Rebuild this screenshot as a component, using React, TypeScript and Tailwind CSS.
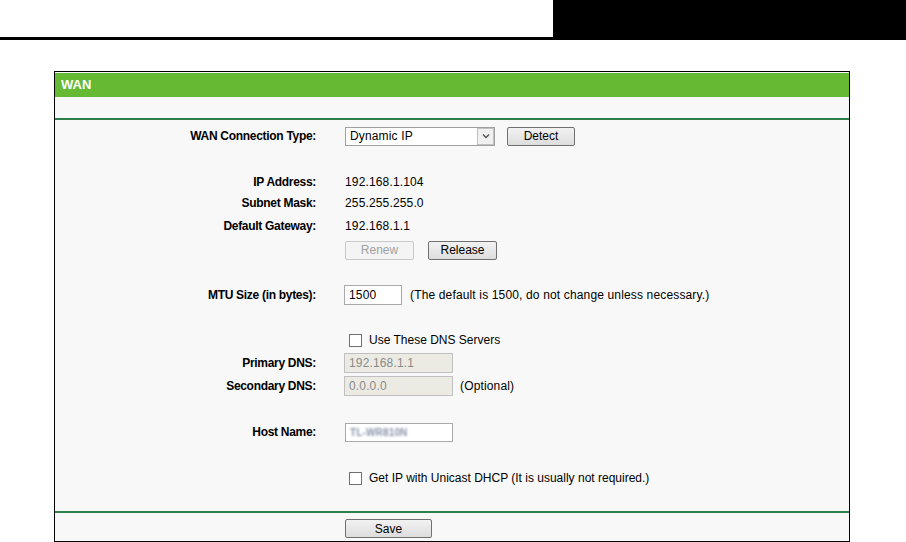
import React from "react";

const font = { fontFamily: '"Liberation Sans", Arial, sans-serif' };

function Row({ label, className = "", children }: { label?: string; className?: string; children?: React.ReactNode }) {
  return (
    <div className={"flex items-center " + className}>
      <div className="w-[261px] shrink-0 text-right font-bold text-[12px] tracking-[-0.3px] text-black">{label ? label : ""}</div>
      <div className="flex items-center pl-[29px] text-[12px] tracking-[0.15px] text-black">{children}</div>
    </div>
  );
}

function Btn({ children, disabled = false, w }: { children: React.ReactNode; disabled?: boolean; w: string }) {
  return (
    <div
      className={
        "h-[19px] flex items-center justify-center rounded-[2px] border text-[12px] tracking-normal bg-gradient-to-b " +
        w +
        (disabled
          ? " border-[#c9c9c9] from-[#f4f4f4] to-[#f4f4f4] text-[#a0a0a0]"
          : " border-[#707070] from-[#f2f2f2] to-[#dddddd] text-black")
      }
    >
      {children}
    </div>
  );
}

function Check({ label }: { label: string }) {
  return (
    <div className="flex items-center">
      <div className="ml-[4px] w-[13px] h-[13px] border border-[#707070] bg-white" />
      <span className="ml-[7px] text-[12px] tracking-normal text-black">{label}</span>
    </div>
  );
}

export default function App() {
  return (
    <div className="w-[906px] h-[542px] bg-white overflow-hidden" style={font}>
      <div className="flex h-[40px]">
        <div className="flex-1 border-b-[3px] border-black" />
        <div className="w-[353px] bg-black" />
      </div>
      <div className="ml-[54px] mt-[31px] w-[796px] h-[471px] border border-black bg-[#f8f8f8] flex flex-col">
        <div className="mt-[1px] h-[24px] bg-[#66b933] flex items-center pl-[6px]">
          <span className="text-white font-bold text-[13px]">WAN</span>
        </div>
        <div className="h-[21px]" />
        <div className="h-[2px] bg-[#2f7f4a]" />
        <div className="pt-[5px] flex flex-col">
          <Row label="WAN Connection Type:" className="h-[22px]">
            <div className="w-[150px] h-[19px] border border-[#a0a0a0] bg-white flex items-center justify-between">
              <span className="pl-[4px] text-[12px]">Dynamic IP</span>
              <div className="w-[17px] h-[17px] border border-[#c0c0c0] bg-[#f0f0f0] flex items-center justify-center">
                <svg width="8" height="6" viewBox="0 0 8 6">
                  <path d="M1 1.5 L4 4.5 L7 1.5" fill="none" stroke="#555" strokeWidth="1.4" />
                </svg>
              </div>
            </div>
            <div className="ml-[12px]">
              <Btn w="w-[68px]">Detect</Btn>
            </div>
          </Row>
          <Row label="IP Address:" className="mt-[24px] h-[21px]">192.168.1.104</Row>
          <Row label="Subnet Mask:" className="h-[22px]">255.255.255.0</Row>
          <Row label="Default Gateway:" className="h-[23px]">192.168.1.1</Row>
          <Row className="mt-[2px] h-[22px]">
            <Btn w="w-[69px]" disabled>
              Renew
            </Btn>
            <div className="ml-[14px]">
              <Btn w="w-[69px]">Release</Btn>
            </div>
          </Row>
          <Row label="MTU Size (in bytes):" className="mt-[23px] h-[22px]">
            <div className="-ml-[1px] w-[58px] h-[20px] border border-[#a9a9a9] bg-white flex items-center pl-[4px]">1500</div>
            <span className="ml-[8px]">(The default is 1500, do not change unless necessary.)</span>
          </Row>
          <Row className="mt-[23px] h-[22px]">
            <Check label="Use These DNS Servers" />
          </Row>
          <Row label="Primary DNS:" className="mt-[1px] h-[22px]">
            <div className="-ml-[1px] w-[109px] h-[20px] border border-[#c0c0c0] bg-[#ebebe4] flex items-center pl-[4px] text-[#8a8a8a]">192.168.1.1</div>
          </Row>
          <Row label="Secondary DNS:" className="mt-[1px] h-[22px]">
            <div className="-ml-[1px] w-[109px] h-[20px] border border-[#c0c0c0] bg-[#ebebe4] flex items-center pl-[4px] text-[#8a8a8a]">0.0.0.0</div>
            <span className="ml-[7px]">(Optional)</span>
          </Row>
          <Row label="Host Name:" className="mt-[24px] h-[22px]">
            <div className="w-[108px] h-[19px] border border-[#a9a9a9] bg-white flex items-center pl-[4px]">
              <span className="text-[10px] font-bold text-[#8a93aa] blur-[1.3px]">TL-WR810N</span>
            </div>
          </Row>
          <Row className="mt-[24px] h-[22px]">
            <Check label="Get IP with Unicast DHCP (It is usually not required.)" />
          </Row>
        </div>
        <div className="mt-[22px] h-[2px] bg-[#2f7f4a]" />
        <div className="pl-[290px] pt-[6px]">
          <Btn w="w-[87px]">Save</Btn>
        </div>
      </div>
    </div>
  );
}
